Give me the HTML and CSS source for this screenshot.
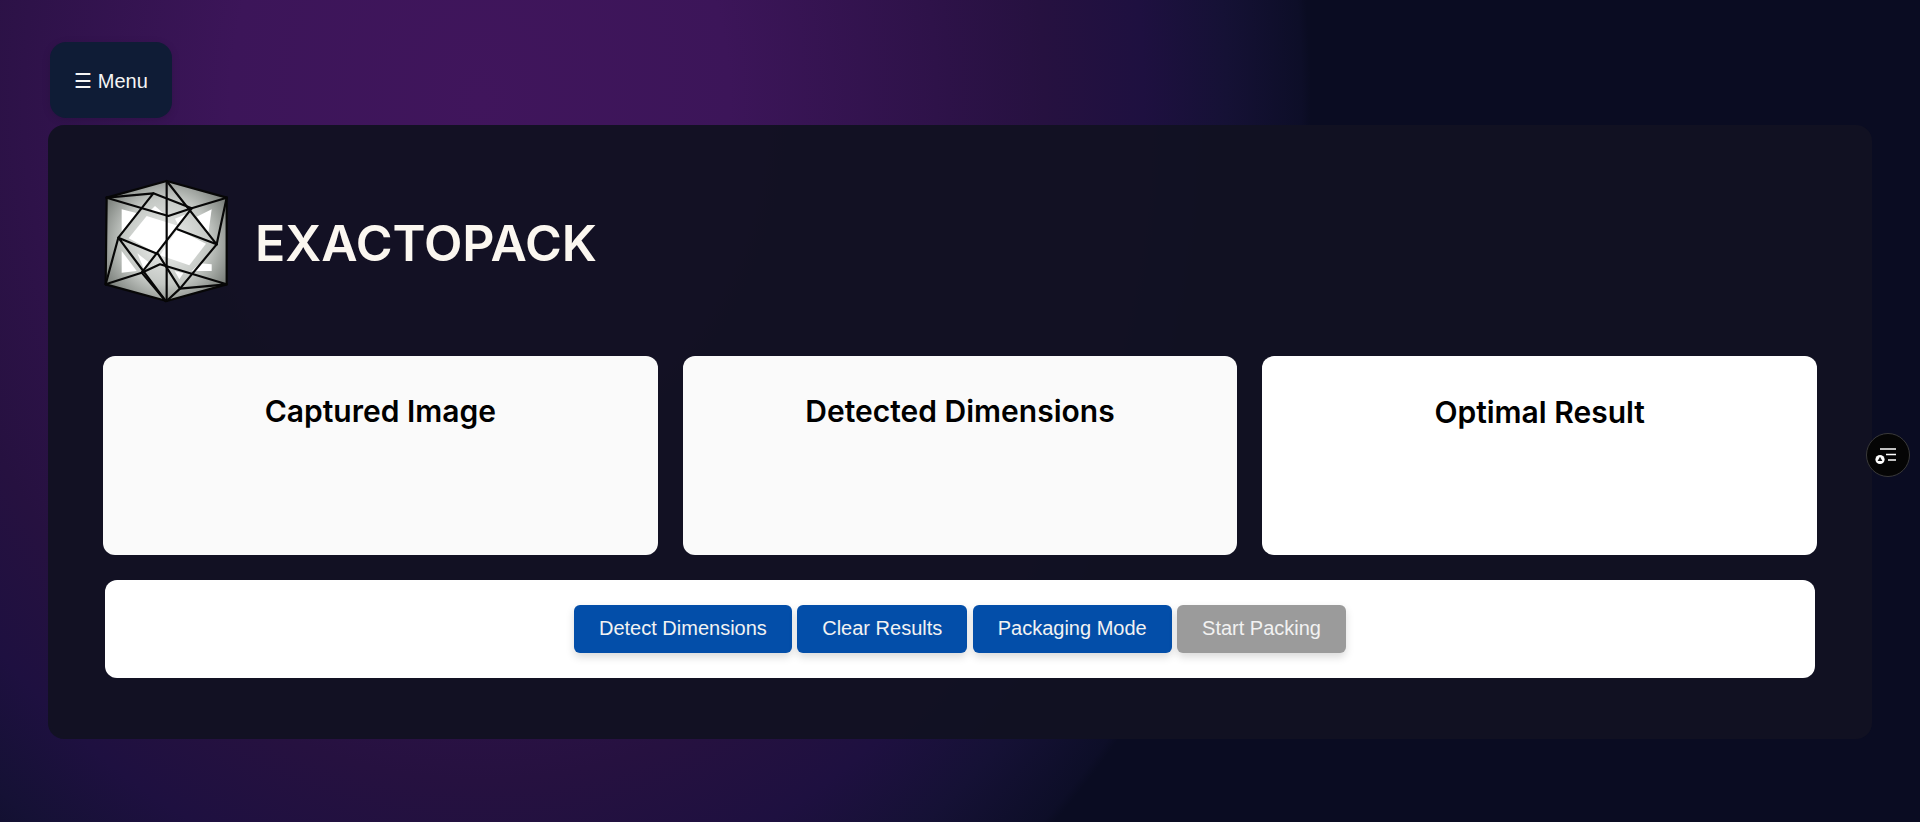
FILE: index.html
```html
<!DOCTYPE html>
<html lang="en">
<head>
<meta charset="utf-8">
<title>ExactoPack</title>
<link rel="stylesheet" href="styles.css">
</head>
<body>
<button class="menu-btn" type="button">☰ Menu</button>
<main class="panel">
  <header class="brand">
    <svg class="logo" viewBox="9 9 381 372" aria-hidden="true">
      <defs>
        <radialGradient id="shade" cx="50%" cy="50%" r="60%">
          <stop offset="0" stop-color="#f0f1f0"/>
          <stop offset="0.6" stop-color="#c4c8c4"/>
          <stop offset="1" stop-color="#777c77"/>
        </radialGradient>
      </defs>
      <polygon points="200,15 380,65 380,325 200,375 17,325 20,65" fill="url(#shade)"/>
      <g fill="#ffffff">
        <polygon points="65,100 112,112 65,170"/>
        <polygon points="335,100 325,172 290,122"/>
        <polygon points="140,120 236,150 170,232 86,187"/>
        <polygon points="232,160 318,203 268,268 180,238"/>
        <polygon points="65,225 110,285 65,290"/>
        <polygon points="335,265 335,285 275,285 300,262"/>
        <polygon points="165,90 190,112 150,105"/>
        <polygon points="225,128 258,115 235,148"/>
        <polygon points="224,285 250,292 238,310"/>
        <polygon points="112,232 150,262 132,280"/>
      </g>
      <g fill="none" stroke="#070707" stroke-width="6.5" stroke-linejoin="round" stroke-linecap="round">
        <polygon points="200,15 380,65 380,325 200,375 17,325 20,65"/>
        <path d="M200 15V375"/>
        <path d="M20 65L160 52L55 185L17 325"/>
        <path d="M20 65L205 120L275 97L380 65"/>
        <path d="M160 52L275 97"/>
        <path d="M200 15L350 205L240 338L175 235L55 185L197 375"/>
        <path d="M350 205L380 65"/>
        <path d="M275 97L125 290L17 325"/>
        <path d="M232 160L350 205"/>
        <path d="M125 290L180 265L380 325L240 338L200 375"/>
        <path d="M125 290L197 375"/>
      </g>
    </svg>
    <h1 class="brand-name">EXACTOPACK</h1>
  </header>
  <section class="cards">
    <article class="card"><h2 class="card-title">Captured Image</h2></article>
    <article class="card"><h2 class="card-title">Detected Dimensions</h2></article>
    <article class="card card-result"><h2 class="card-title">Optimal Result</h2></article>
  </section>
  <section class="actions">
    <button class="action" type="button">Detect Dimensions</button>
    <button class="action" type="button">Clear Results</button>
    <button class="action" type="button">Packaging Mode</button>
    <button class="action action-off" type="button">Start Packing</button>
  </section>
</main>
<button class="fab" type="button" aria-label="Tasks">
  <svg viewBox="0 0 30 30" width="30" height="30" aria-hidden="true">
    <path d="M7 9H23M13 14.5H23M15 20H23" stroke="#fff" stroke-width="1.5" fill="none"/>
    <circle cx="7" cy="19.5" r="4.6" fill="#fff"/>
    <polygon points="7,16.8 9.4,21 4.6,21" fill="#111"/>
  </svg>
</button>
</body>
</html>
```

FILE: styles.css
```css
* { box-sizing: border-box; }
html, body { height: 100%; }
body {
  margin: 0;
  height: 822px;
  overflow: hidden;
  padding: 42px 48px 0;
  font-family: "Liberation Sans", Arial, sans-serif;
  background-color: #0a0c22;
  background-image:
    radial-gradient(ellipse 830px 1000px at 480px 100px, #40155c 0%, #3c1559 30%, #2e1249 55%, #261140 68%, #1e1040 80%, #151135 90%, #0d0e28 99%, #0a0c22 100%);
}
.menu-btn {
  display: block;
  width: 122px;
  height: 76px;
  margin: 0 0 7px 2px;
  padding: 2px 0 0;
  border: 0;
  border-radius: 16px;
  background: #0f1c36;
  color: #f5f5f5;
  font: 20px "Liberation Sans", Arial, sans-serif;
  box-shadow: 0 2px 8px rgba(0, 0, 0, 0.12);
}
.panel {
  width: 1824px;
  height: 614px;
  padding: 53px 55px 0;
  border-radius: 16px;
  background: rgba(18, 18, 34, 0.97);
}
.brand {
  display: flex;
  align-items: center;
  gap: 25px;
  height: 125px;
  margin-bottom: 53px;
}
.logo { width: 127px; height: 124px; flex: none; }
.brand-name {
  margin: 4px 0 0;
  font: 600 50px Inter, sans-serif;
  color: #fbf7f0;
}
.cards {
  display: grid;
  grid-template-columns: repeat(3, 1fr);
  gap: 25px;
  height: 199px;
}
.card {
  padding: 35px 16px 0;
  border-radius: 12px;
  background: #fafafa;
  text-align: center;
}
.card-result { background: #fff; }
.card-title {
  margin: 0;
  font: 600 30px/40px Inter, sans-serif;
  color: #000;
}
.card-result .card-title { padding-top: 1px; }
.actions {
  display: flex;
  justify-content: center;
  gap: 5.4px;
  height: 98px;
  margin: 25px 2px 0;
  padding-top: 25px;
  border-radius: 12px;
  background: #fff;
}
.action {
  height: 48px;
  padding: 0 25px 2px;
  border: 0;
  border-radius: 6px;
  background: #034ea9;
  color: #f2f2f2;
  font: 20px "Liberation Sans", Arial, sans-serif;
  box-shadow: 0 4px 8px rgba(0, 0, 0, 0.15);
}
.action-off { background: #9b9b9b; }
.fab {
  position: fixed;
  left: 1866px;
  top: 433px;
  display: flex;
  align-items: center;
  justify-content: center;
  width: 44px;
  height: 44px;
  padding: 0;
  border: 1px solid #3a3a3a;
  border-radius: 50%;
  background: #050505;
}
```
